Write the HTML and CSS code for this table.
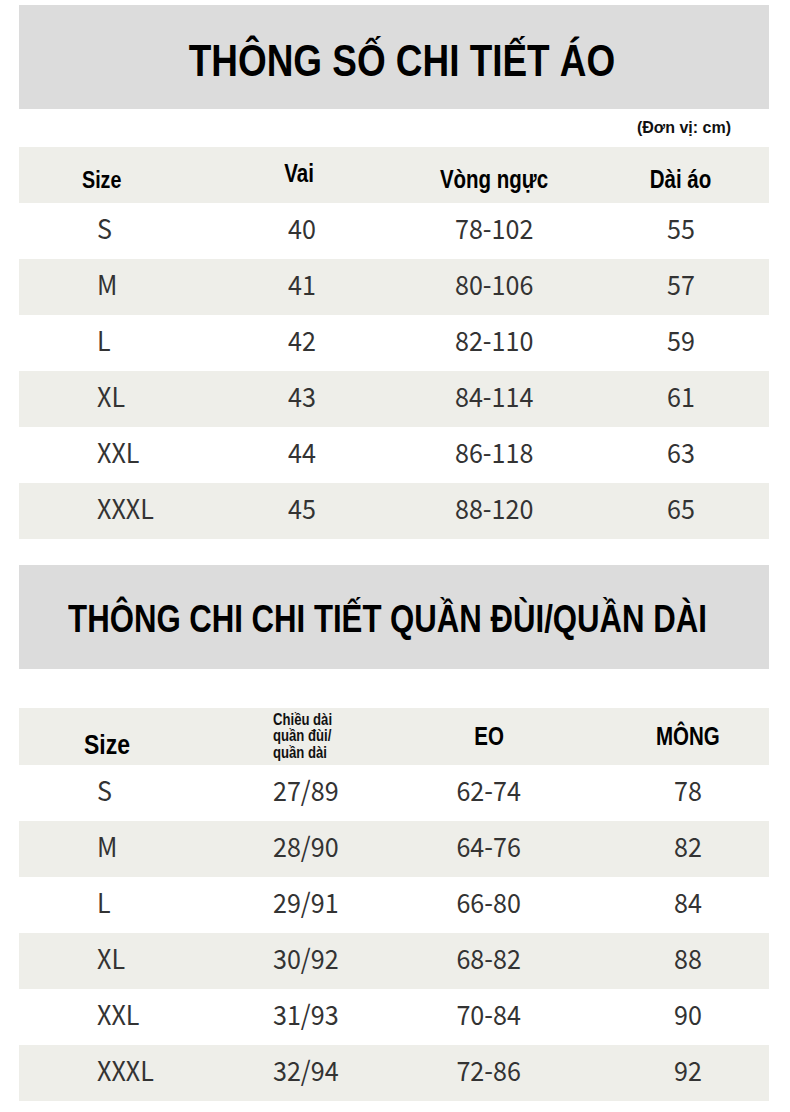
FILE: index.html
```html
<!DOCTYPE html>
<html lang="vi">
<head>
<meta charset="utf-8">
<title>Bảng size</title>
<link rel="stylesheet" href="styles.css">
</head>
<body>
<div class="page">
  <div class="title-box"><h1 class="title title-1"><span class="n">THÔNG SỐ CHI TIẾT ÁO</span></h1></div>
  <div class="unit">(Đơn vị: cm)</div>
  <div class="table t1">
    <div class="row head">
      <div class="c1 h-size"><span class="n">Size</span></div>
      <div class="c2 h-vai"><span class="n">Vai</span></div>
      <div class="c3 h-low"><span class="n">Vòng ngực</span></div>
      <div class="c4 h-low"><span class="n">Dài áo</span></div>
    </div>
    <div class="row"><div class="c1"><span class="d">S</span></div><div class="c2"><span class="d">40</span></div><div class="c3"><span class="d">78-102</span></div><div class="c4"><span class="d">55</span></div></div>
    <div class="row alt"><div class="c1"><span class="d">M</span></div><div class="c2"><span class="d">41</span></div><div class="c3"><span class="d">80-106</span></div><div class="c4"><span class="d">57</span></div></div>
    <div class="row"><div class="c1"><span class="d">L</span></div><div class="c2"><span class="d">42</span></div><div class="c3"><span class="d">82-110</span></div><div class="c4"><span class="d">59</span></div></div>
    <div class="row alt"><div class="c1"><span class="d">XL</span></div><div class="c2"><span class="d">43</span></div><div class="c3"><span class="d">84-114</span></div><div class="c4"><span class="d">61</span></div></div>
    <div class="row"><div class="c1"><span class="d">XXL</span></div><div class="c2"><span class="d">44</span></div><div class="c3"><span class="d">86-118</span></div><div class="c4"><span class="d">63</span></div></div>
    <div class="row alt"><div class="c1"><span class="d">XXXL</span></div><div class="c2"><span class="d">45</span></div><div class="c3"><span class="d">88-120</span></div><div class="c4"><span class="d">65</span></div></div>
  </div>

  <div class="title-box second"><h1 class="title title-2"><span class="n">THÔNG CHI CHI TIẾT QUẦN ĐÙI/QUẦN DÀI</span></h1></div>

  <div class="table t2">
    <div class="row head">
      <div class="c1 h-size2"><span class="n">Size</span></div>
      <div class="c2 h-len"><span class="n">Chiều dài<br>quần đùi/<br>quần dài</span></div>
      <div class="c3"><span class="n">EO</span></div>
      <div class="c4"><span class="n">MÔNG</span></div>
    </div>
    <div class="row"><div class="c1"><span class="d">S</span></div><div class="c2"><span class="d">27/89</span></div><div class="c3"><span class="d">62-74</span></div><div class="c4"><span class="d">78</span></div></div>
    <div class="row alt"><div class="c1"><span class="d">M</span></div><div class="c2"><span class="d">28/90</span></div><div class="c3"><span class="d">64-76</span></div><div class="c4"><span class="d">82</span></div></div>
    <div class="row"><div class="c1"><span class="d">L</span></div><div class="c2"><span class="d">29/91</span></div><div class="c3"><span class="d">66-80</span></div><div class="c4"><span class="d">84</span></div></div>
    <div class="row alt"><div class="c1"><span class="d">XL</span></div><div class="c2"><span class="d">30/92</span></div><div class="c3"><span class="d">68-82</span></div><div class="c4"><span class="d">88</span></div></div>
    <div class="row"><div class="c1"><span class="d">XXL</span></div><div class="c2"><span class="d">31/93</span></div><div class="c3"><span class="d">70-84</span></div><div class="c4"><span class="d">90</span></div></div>
    <div class="row alt"><div class="c1"><span class="d">XXXL</span></div><div class="c2"><span class="d">32/94</span></div><div class="c3"><span class="d">72-86</span></div><div class="c4"><span class="d">92</span></div></div>
  </div>
</div>
</body>
</html>
```
FILE: styles.css
```css
html, body {
  margin: 0;
  padding: 0;
  background: #ffffff;
}

.page {
  width: 750px;
  padding: 5px 21px 0 19px;
  font-family: "Liberation Sans", Arial, sans-serif;
  color: #000;
}

/* condensed look: the reference uses a narrow face */
.n,
.d {
  display: inline-block;
  white-space: nowrap;
  transform-origin: center center;
}

.n {
  transform: scaleX(0.82);
}

.d {
  transform: scaleX(0.93);
}

.title-box {
  height: 104px;
  background: #dcdcdc;
  display: flex;
  align-items: center;
  justify-content: center;
}

.title {
  margin: 0;
  padding-top: 6px;
  font-size: 45px;
  font-weight: bold;
  line-height: 1;
  white-space: nowrap;
}

.title-1 {
  padding-left: 16px;
}

.title-2 {
  font-size: 38px;
  padding-top: 4px;
  padding-right: 14px;
}

.second {
  margin-top: 26px;
}

.unit {
  height: 38px;
  display: flex;
  align-items: center;
  justify-content: flex-end;
  padding-right: 38px;
  font-weight: bold;
  font-size: 16px;
  color: #111;
}

.table .row {
  display: grid;
  box-sizing: border-box;
  height: 56px;
  padding-bottom: 7px;
  align-items: center;
  font-family: "Noto Sans CJK SC", "Noto Sans", sans-serif;
  font-weight: 400;
  font-size: 27px;
  line-height: 1;
  color: #333;
}

.t1 .row {
  grid-template-columns: 181px 204px 180px 185px;
}

.t2 {
  margin-top: 39px;
}

.t2 .row {
  grid-template-columns: 254px 150px 132px 214px;
}

.row.alt,
.row.head {
  background: #eeeee9;
}

.row .c1 {
  padding-left: 78px;
  text-align: left;
}

.row .c1 .n,
.row .c1 .d,
.t2 .c2 .n,
.t2 .c2 .d {
  transform-origin: left center;
}

.t1 .c2,
.t1 .c3 {
  text-align: center;
}

.t1 .c4 {
  text-align: center;
  padding-left: 9px;
}

.t2 .c2 {
  text-align: left;
}

.t2 .c3 {
  text-align: center;
}

.t2 .c4 {
  text-align: center;
  padding-left: 52px;
}

.table .row.head {
  padding-bottom: 0;
  font-family: "Liberation Sans", Arial, sans-serif;
  font-weight: bold;
  color: #000;
  font-size: 25px;
  line-height: normal;
}

.t1 .head .h-size {
  padding-left: 63px;
  padding-top: 10px;
  font-size: 24px;
}

.t1 .head .h-vai {
  padding-right: 6px;
  padding-bottom: 4px;
}

.t1 .head .h-low {
  padding-top: 8px;
}

.t2 .row.head {
  height: 57px;
}

.t2 .head .h-size2 {
  padding-left: 65px;
  padding-top: 16px;
  font-size: 28px;
}

.t2 .head .h-len {
  font-size: 16px;
  line-height: 16.5px;
  color: #111;
}
```
